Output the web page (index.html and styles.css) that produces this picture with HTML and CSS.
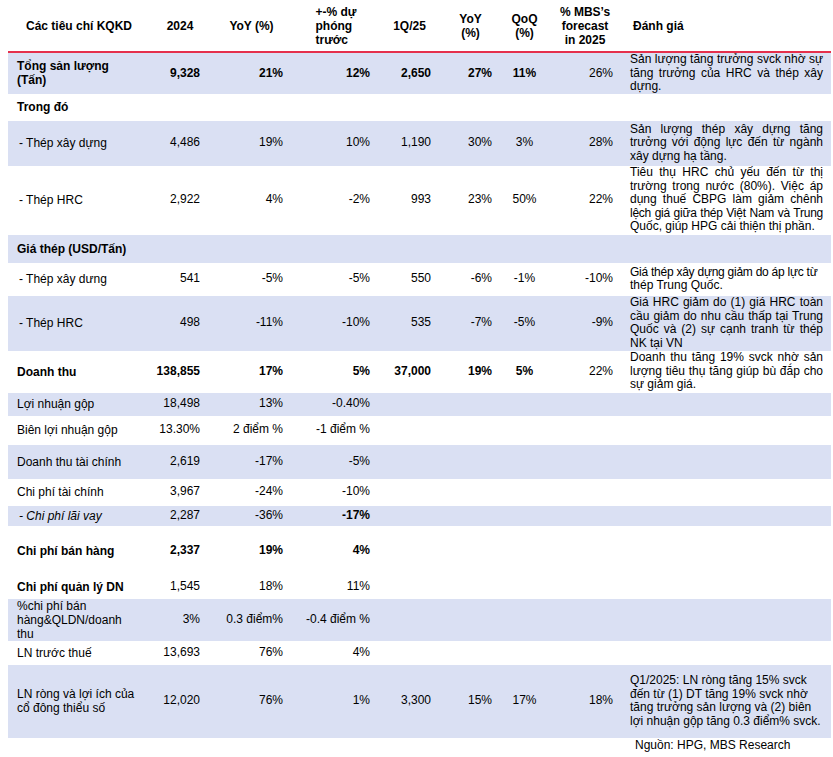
FILE: index.html
```html
<!DOCTYPE html>
<html lang="vi">
<head>
<meta charset="utf-8">
<title>Các tiêu chí KQKD</title>
<link rel="stylesheet" href="styles.css">
</head>
<body>
<div class="page">
<table class="kq">
  <colgroup>
    <col class="c1"><col class="c2"><col class="c3"><col class="c4"><col class="c5"><col class="c6"><col class="c7"><col class="c8"><col class="c9">
  </colgroup>
  <thead>
    <tr class="hd">
      <th class="ctr">Các tiêu chí KQKD</th>
      <th class="ctr">2024</th>
      <th class="ctr">YoY (%)</th>
      <th class="ctr"><span class="stack">+-% dự<br>phóng<br>trước</span></th>
      <th class="ctr">1Q/25</th>
      <th class="ctr">YoY<br>(%)</th>
      <th class="ctr">QoQ<br>(%)</th>
      <th class="ctr">% MBS’s<br>forecast<br>in 2025</th>
      <th class="lft">Đánh giá</th>
    </tr>
  </thead>
  <tbody>
    <tr class="sh r41">
      <td class="lab b">Tổng sản lượng<br>(Tấn)</td>
      <td class="num b">9,328</td><td class="num b">21%</td><td class="num b">12%</td>
      <td class="num b">2,650</td><td class="num b">27%</td><td class="mid b">11%</td><td class="num">26%</td>
      <td class="cm"><span class="j">Sản lượng tăng trưởng svck nhờ sự</span><span class="j">tăng trưởng của HRC và thép xây</span><span class="l">dựng.</span></td>
    </tr>
    <tr class="r27">
      <td class="lab b">Trong đó</td>
      <td></td><td></td><td></td><td></td><td></td><td></td><td></td><td></td>
    </tr>
    <tr class="sh r45">
      <td class="lab sub">- Thép xây dựng</td>
      <td class="num">4,486</td><td class="num">19%</td><td class="num">10%</td>
      <td class="num">1,190</td><td class="num">30%</td><td class="mid">3%</td><td class="num">28%</td>
      <td class="cm"><span class="j">Sản lượng thép xây dựng tăng</span><span class="j">trưởng với động lực đến từ ngành</span><span class="l">xây dựng hạ tầng.</span></td>
    </tr>
    <tr class="r69">
      <td class="lab sub">- Thép HRC</td>
      <td class="num">2,922</td><td class="num">4%</td><td class="num">-2%</td>
      <td class="num">993</td><td class="num">23%</td><td class="mid">50%</td><td class="num">22%</td>
      <td class="cm"><span class="j">Tiêu thụ HRC chủ yếu đến từ thị</span><span class="j">trường trong nước (80%). Việc áp</span><span class="j">dụng thuế CBPG làm giảm chênh</span><span class="j tight">lệch giá giữa thép Việt Nam và Trung</span><span class="l">Quốc, giúp HPG cải thiện thị phần.</span></td>
    </tr>
    <tr class="sh r28">
      <td class="lab b wide" colspan="2">Giá thép (USD/Tấn)</td>
      <td></td><td></td><td></td><td></td><td></td><td></td><td></td>
    </tr>
    <tr class="r33">
      <td class="lab sub">- Thép xây dưng</td>
      <td class="num">541</td><td class="num">-5%</td><td class="num">-5%</td>
      <td class="num">550</td><td class="num">-6%</td><td class="mid">-1%</td><td class="num">-10%</td>
      <td class="cm"><span class="l tight">Giá thép xây dựng giảm do áp lực từ</span><span class="l">thép Trung Quốc.</span></td>
    </tr>
    <tr class="sh r55">
      <td class="lab sub">- Thép HRC</td>
      <td class="num">498</td><td class="num">-11%</td><td class="num">-10%</td>
      <td class="num">535</td><td class="num">-7%</td><td class="mid">-5%</td><td class="num">-9%</td>
      <td class="cm"><span class="j">Giá HRC giảm do (1) giá HRC toàn</span><span class="j">cầu giảm do nhu cầu thấp tại Trung</span><span class="j">Quốc và (2) sự cạnh tranh từ thép</span><span class="l">NK tại VN</span></td>
    </tr>
    <tr class="r42">
      <td class="lab b">Doanh thu</td>
      <td class="num b">138,855</td><td class="num b">17%</td><td class="num b">5%</td>
      <td class="num b">37,000</td><td class="num b">19%</td><td class="mid b">5%</td><td class="num">22%</td>
      <td class="cm"><span class="j">Doanh thu tăng 19% svck nhờ sản</span><span class="j">lượng tiêu thụ tăng giúp bù đắp cho</span><span class="l">sự giảm giá.</span></td>
    </tr>
    <tr class="sh r23">
      <td class="lab">Lợi nhuận gộp</td>
      <td class="num">18,498</td><td class="num">13%</td><td class="num">-0.40%</td>
      <td></td><td></td><td></td><td></td><td></td>
    </tr>
    <tr class="r29">
      <td class="lab">Biên lợi nhuận gộp</td>
      <td class="num">13.30%</td><td class="num">2 điểm %</td><td class="num">-1 điểm %</td>
      <td></td><td></td><td></td><td></td><td></td>
    </tr>
    <tr class="sh r34">
      <td class="lab">Doanh thu tài chính</td>
      <td class="num">2,619</td><td class="num">-17%</td><td class="num">-5%</td>
      <td></td><td></td><td></td><td></td><td></td>
    </tr>
    <tr class="r27">
      <td class="lab">Chi phí tài chính</td>
      <td class="num">3,967</td><td class="num">-24%</td><td class="num">-10%</td>
      <td></td><td></td><td></td><td></td><td></td>
    </tr>
    <tr class="sh r20">
      <td class="lab sub i">- Chi phí lãi vay</td>
      <td class="num">2,287</td><td class="num">-36%</td><td class="num b">-17%</td>
      <td></td><td></td><td></td><td></td><td></td>
    </tr>
    <tr class="r50">
      <td class="lab b">Chi phí bán hàng</td>
      <td class="num b">2,337</td><td class="num b">19%</td><td class="num b">4%</td>
      <td></td><td></td><td></td><td></td><td></td>
    </tr>
    <tr class="r23">
      <td class="lab b">Chi phí quản lý DN</td>
      <td class="num">1,545</td><td class="num">18%</td><td class="num">11%</td>
      <td></td><td></td><td></td><td></td><td></td>
    </tr>
    <tr class="sh r42">
      <td class="lab">%chi phí bán<br>hàng&amp;QLDN/doanh<br>thu</td>
      <td class="num">3%</td><td class="num">0.3 điểm%</td><td class="num">-0.4 điểm %</td>
      <td></td><td></td><td></td><td></td><td></td>
    </tr>
    <tr class="r24">
      <td class="lab">LN trước thuế</td>
      <td class="num">13,693</td><td class="num">76%</td><td class="num">4%</td>
      <td></td><td></td><td></td><td></td><td></td>
    </tr>
    <tr class="sh r73">
      <td class="lab">LN ròng và lợi ích của<br>cổ đông thiểu số</td>
      <td class="num">12,020</td><td class="num">76%</td><td class="num">1%</td>
      <td class="num">3,300</td><td class="num">15%</td><td class="mid">17%</td><td class="num">18%</td>
      <td class="cm"><span class="l">Q1/2025: LN ròng tăng 15% svck</span><span class="l">đến từ (1) DT tăng 19% svck nhờ</span><span class="l">tăng trưởng sản lượng và (2) biên</span><span class="l">lợi nhuận gộp tăng 0.3 điểm% svck.</span></td>
    </tr>
  </tbody>
</table>
<p class="src">Nguồn: HPG, MBS Research</p>
</div>
</body>
</html>
```

FILE: styles.css
```css
html, body {
  margin: 0;
  padding: 0;
  background: #ffffff;
}

.page {
  padding-left: 8px;
  font-family: "Liberation Sans", Arial, sans-serif;
  font-size: 12px;
  color: #000;
}

.kq {
  width: 823px;
  border-collapse: collapse;
  table-layout: fixed;
}

.c1 { width: 142px; }
.c2 { width: 60px; }
.c3 { width: 83px; }
.c4 { width: 86px; }
.c5 { width: 61px; }
.c6 { width: 61px; }
.c7 { width: 47px; }
.c8 { width: 74px; }
.c9 { width: 209px; }

.hd {
  height: 52px;
}

.hd th {
  font-weight: bold;
  line-height: 14px;
  vertical-align: middle;
  border-bottom: 2px solid #e5304c;
  padding: 0;
}

.hd .ctr { text-align: center; }
.hd .lft { text-align: left; padding-left: 11px; }

.stack {
  display: inline-block;
  text-align: left;
}

.kq td {
  padding: 0;
  line-height: 13.5px;
  vertical-align: middle;
  white-space: nowrap;
}

.sh td { background: #dae0f3; }

.r20 { height: 20px; }
.r23 { height: 23px; }
.r24 { height: 24px; }
.r27 { height: 27px; }
.r28 { height: 28px; }
.r29 { height: 29px; }
.r33 { height: 33px; }
.r34 { height: 34px; }
.r41 { height: 41px; }
.r42 { height: 42px; }
.r45 { height: 45px; }
.r50 { height: 50px; }
.r55 { height: 55px; }
.r69 { height: 69px; }
.r73 { height: 73px; }

.kq td.lab {
  padding-left: 9px;
  text-align: left;
  line-height: 14px;
}

.kq td.sub { padding-left: 11px; }

.kq td.num {
  text-align: right;
  padding-right: 9px;
}

.kq tr td:nth-child(2).num,
.kq tr td:nth-child(3).num { padding-right: 10px; }

.kq td.mid { text-align: center; }

.b { font-weight: bold; }
.i { font-style: italic; }

.kq td.cm {
  padding: 0 8px 0 8px;
  white-space: normal;
  text-align: left;
}

.j {
  display: block;
  text-align: justify;
  text-align-last: justify;
}

.tight { letter-spacing: -0.25px; }

.l {
  display: block;
  white-space: nowrap;
}

.src {
  margin: 0;
  padding-left: 627px;
  line-height: 14px;
}
```
